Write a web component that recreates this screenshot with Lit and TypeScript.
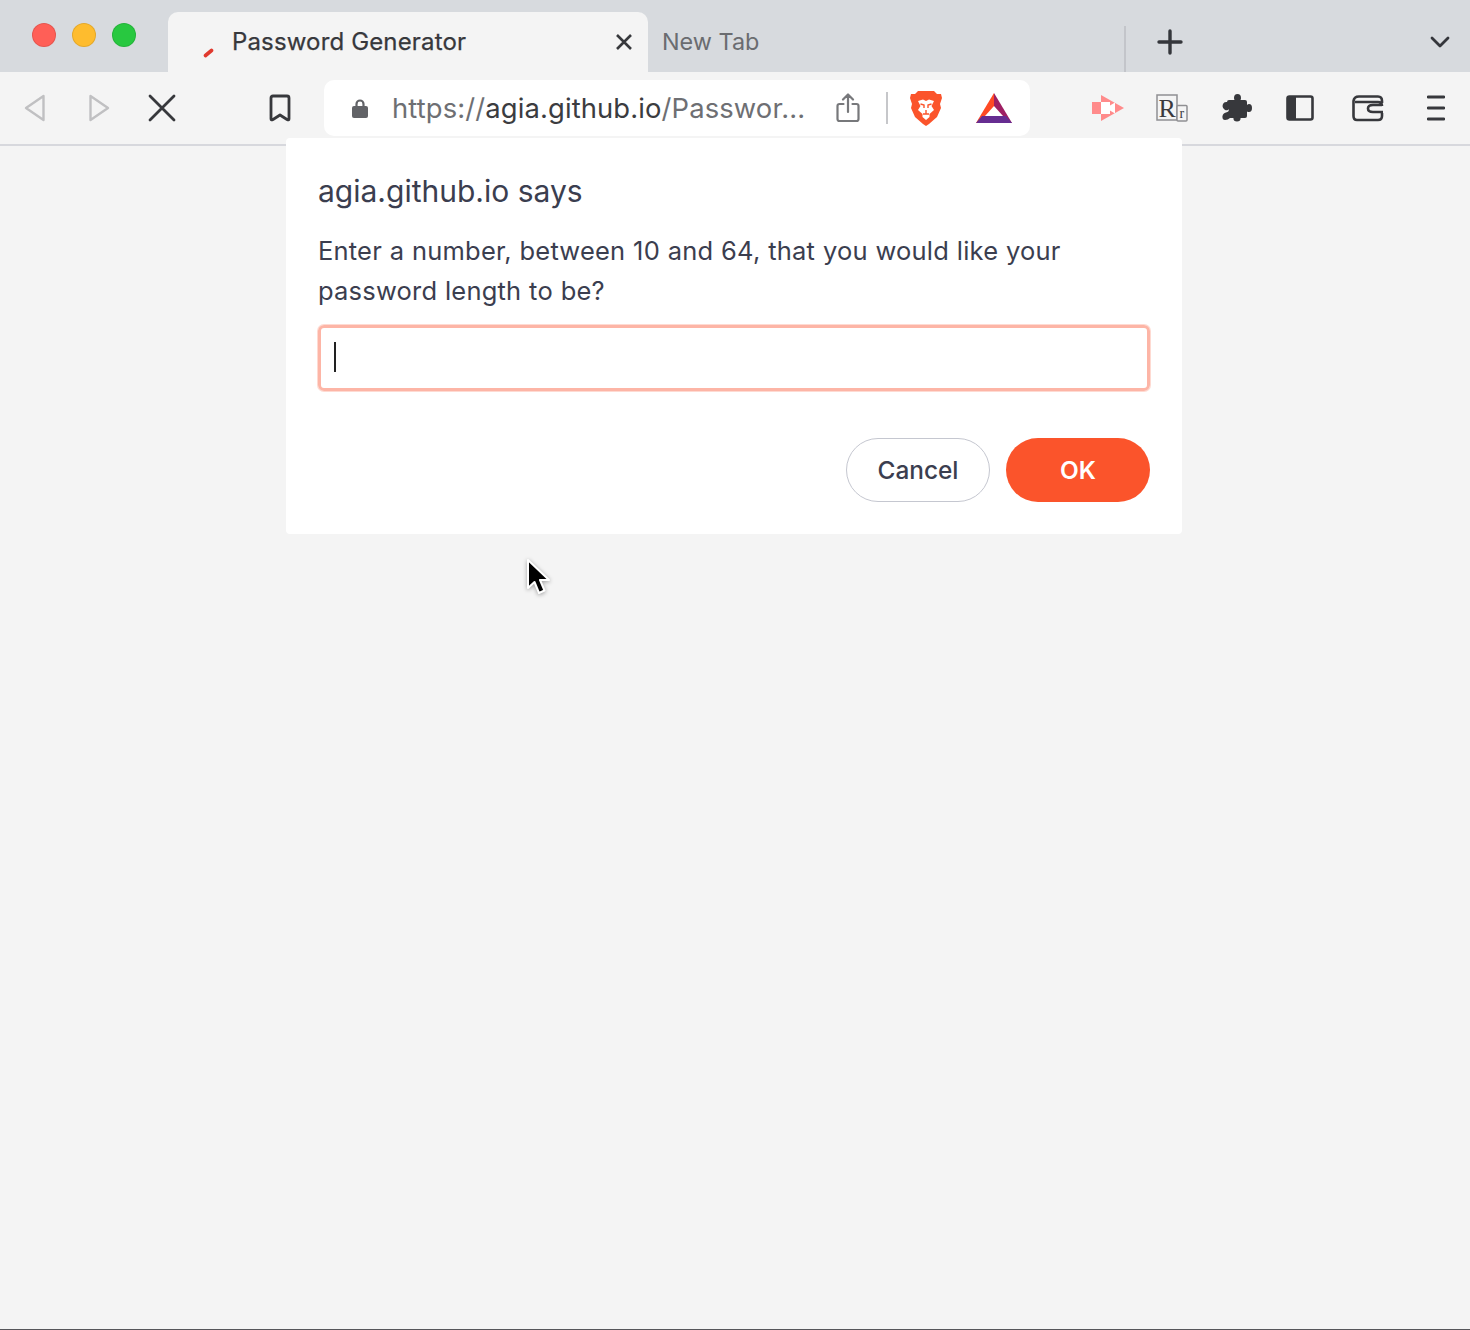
import { LitElement, html, css, svg } from "lit";
import { customElement } from "lit/decorators.js";

const ic = (w: number, h: number, vb: string, body: unknown, cls = "") =>
  html`<svg class=${cls} width=${w} height=${h} viewBox=${vb} style="flex:none;display:block">${body}</svg>`;

@customElement("app-root")
export class AppRoot extends LitElement {
  static styles = css`
    :host { display: block; width: 1470px; height: 1330px; position: relative; overflow: hidden; background: #f4f4f4; font-family: Inter, "Liberation Sans", sans-serif; }
    .strip { height: 72px; background: #d7dade; display: flex; align-items: flex-start; }
    .lights { display: flex; gap: 16px; padding: 23px 32px 0 32px; width: 168px; box-sizing: border-box; }
    .light { width: 24px; height: 24px; border-radius: 50%; box-sizing: border-box; border: 1px solid rgba(0,0,0,.1); }
    .tab { margin-top: 12px; width: 480px; height: 60px; box-sizing: border-box; background: #f4f4f4; border-radius: 10px 10px 0 0; display: flex; align-items: center; padding: 0 14px 0 35px; font-size: 24px; color: #37383c; }
    .fav { margin-top: 20px; }
    .tab .title { margin-left: 17px; flex: 1; position: relative; top: -1px; font-weight: 400; -webkit-text-stroke: .25px #37383c; letter-spacing: .15px; }
    .tab2 { width: 476px; height: 60px; margin-top: 12px; padding: 0 0 0 14px; box-sizing: border-box; display: flex; align-items: center; font-size: 23.4px; color: #6a6c70; }
    .tab2 span { position: relative; top: -1px; }
    .sep { width: 2px; height: 46px; background: #c3c5ca; margin-top: 26px; }
    .plus { margin: 29px 0 0 31px; }
    .chev { margin: 36px 0 0 247px; }
    .bar { height: 72px; display: flex; align-items: center; box-sizing: border-box; position: relative; }
    .line { height: 2px; background: #d7d8dd; }
    .url { width: 706px; height: 56px; background: #fff; border-radius: 10px; display: flex; align-items: center; box-sizing: border-box; margin-left: 32px; padding-left: 28px; font-size: 27.4px; letter-spacing: .12px; color: #6e6f73; white-space: nowrap; }
    .url .text { margin-left: 24px; margin-right: 30px; width: 414px; overflow: hidden; }
    .url b { font-weight: 400; color: #3b3c40; }
    .vr { width: 2px; height: 32px; background: #c6c7ca; margin-left: 26px; }
    .dialog { position: absolute; left: 286px; top: 138px; width: 896px; height: 396px; background: #fff; border-radius: 4px; box-sizing: border-box; padding: 33px 32px 32px; color: #3b3e4f; display: flex; flex-direction: column; }
    .h { font-size: 30px; line-height: 40px; }
    .msg { font-size: 25.5px; line-height: 40px; margin-top: 20px; letter-spacing: .2px; word-spacing: .4px; }
    .input { height: 66px; margin-top: 14px; box-sizing: border-box; border: 3px solid #fdb5a6; border-radius: 6px; box-shadow: 0 0 0 1px rgba(253,181,166,.5); display: flex; align-items: center; padding-left: 13px; }
    .caret { width: 2px; height: 30px; background: #222; margin-top: -2px; }
    .btns { margin-top: 47px; display: flex; justify-content: flex-end; gap: 16px; }
    .btn { width: 144px; height: 64px; border-radius: 32px; box-sizing: border-box; display: flex; align-items: center; justify-content: center; }
    .cancel { border: 1px solid #c5c7d0; color: #3b3e4f; font-weight: 500; font-size: 24.4px; }
    .ok { background: #fb542b; color: #fff; font-weight: 600; font-size: 24.4px; }
    .cursor { position: absolute; left: 525px; top: 558px; filter: drop-shadow(0 1px 2px rgba(0,0,0,.35)); }
    .bottom { position: absolute; left: 0; right: 0; bottom: 0; height: 1px; background: #55565a; }
  `;

  render() {
    const place = (ml: number, el: unknown) => html`<div style="margin-left:${ml}px;display:flex">${el}</div>`;
    return html`
      <div class="strip">
        <div class="lights">
          <div class="light" style="background:#ff5f57"></div>
          <div class="light" style="background:#febc2e"></div>
          <div class="light" style="background:#28c840"></div>
        </div>
        <div class="tab">
          ${ic(12, 12, "0 0 12 12", svg`<path d="M2.500 9.500 L8.500 4.500" stroke="#e0392e" stroke-width="3.600" stroke-linecap="round" fill="none"/>`, "fav")}
          <span class="title">Password Generator</span>
          ${ic(20, 20, "0 0 20 20", svg`<path d="M3 3 L17 17 M17 3 L3 17" stroke="#37383c" stroke-width="2.600" fill="none"/>`)}
        </div>
        <div class="tab2"><span>New Tab</span></div>
        <div class="sep"></div>
        <div class="plus">${ic(26, 26, "0 0 26 26", svg`<path d="M13 2 V24 M2 13 H24" stroke="#34363b" stroke-width="3.400" stroke-linecap="round" fill="none"/>`)}</div>
        <div class="chev">${ic(20, 12, "0 0 20 12", svg`<path d="M2 2 L10 10 L18 2" stroke="#34363b" stroke-width="2.800" stroke-linecap="round" stroke-linejoin="round" fill="none"/>`)}</div>
      </div>

      <div class="bar">
        ${place(24, ic(22, 28, "0 0 22 28", svg`<path d="M19.500 2 V26 L2 14 Z" stroke="#c0c0c2" stroke-width="2.400" stroke-linejoin="round" fill="none"/>`))}
        ${place(42, ic(22, 28, "0 0 22 28", svg`<path d="M2.500 2 V26 L20 14 Z" stroke="#c0c0c2" stroke-width="2.400" stroke-linejoin="round" fill="none"/>`))}
        ${place(38, ic(28, 28, "0 0 28 28", svg`<path d="M2 2 L26 26 M26 2 L2 26" stroke="#37383c" stroke-width="2.800" stroke-linecap="round" fill="none"/>`))}
        ${place(92, ic(24, 28, "0 0 24 28", svg`<path d="M3 4 Q3 2 5 2 H19 Q21 2 21 4 V25 Q21 26.500 19 25.500 L12 21 L5 25.500 Q3 26.500 3 25 Z" stroke="#37383c" stroke-width="2.800" stroke-linejoin="round" fill="none"/>`))}
        <div class="url">
          ${ic(16, 20, "0 0 16 20", svg`<path d="M4.500 9 V6 a3.500 3.500 0 0 1 7 0 V9" stroke="#626367" stroke-width="2.200" fill="none"/><rect x="0" y="8" width="16" height="12" rx="2" fill="#626367"/>`)}
          <span class="text">https://<b>agia.github.io</b>/Passwor...</span>
          ${ic(24, 30, "0 0 24 30", svg`<path d="M7.500 11 H3.500 Q1.500 11 1.500 13 V26 Q1.500 28 3.500 28 H20.500 Q22.500 28 22.500 26 V13 Q22.500 11 20.500 11 H16.500 M12 19 V2 M7 6.500 L12 1.500 L17 6.500" stroke="#77787b" stroke-width="2.200" fill="none" stroke-linecap="round" stroke-linejoin="round"/>`)}
          <div class="vr"></div>
          ${place(22, ic(32, 37, "0 0 32 37", svg`
            <path d="M8 1 H24 L27 4 L31 4 L32 8 L30 14 L31 18 L27 27 L19 34 L16 36 L13 34 L5 27 L1 18 L2 14 L0 8 L1 4 L5 4 Z" fill="#fb542b"/>
            <path d="M8 11 L13 9.500 L16 11 L19 9.500 L24 11 L21.500 16 L24 20 L19.500 24 L19.500 27 L16 30 L12.500 27 L12.500 24 L8 20 L10.500 16 Z" fill="#fff"/>
            <path d="M10.500 14 L14 15 L14 18 M21.500 14 L18 15 L18 18 M13 24 H19 M16 20 V24" stroke="#fb542b" stroke-width="1.400" fill="none"/>`))}
          ${place(34, ic(36, 30, "0 0 36 30", svg`
            <path d="M18 0 L0 30 H10 L18 16 Z" fill="#ff4a24"/>
            <path d="M18 0 V16 L26 30 H36 Z" fill="#9e1f63"/>
            <path d="M0 30 L6 23 H30 L36 30 Z" fill="#662d91"/>
            <path d="M18 13 L9 23 H27 Z" fill="#fff"/>`))}
        </div>
        ${place(62, ic(32, 26, "0 0 32 26", svg`
          <path d="M0 7 H9 V19 H0 Z M9 0 L32 13 L9 26 Z" fill="#ff8b8b"/>
          <path d="M9 7 H18 V10.500 L23 7.500 V18.500 L18 15.500 V19 H9 Z" fill="#fff"/>`))}
        ${place(32, ic(32, 28, "0 0 32 28", svg`
            <rect x="1" y="1" width="20" height="25" fill="none" stroke="#8f8f92" stroke-width="1.500"/>
            <rect x="21" y="11.500" width="10" height="15.500" rx="1" fill="#f4f4f4" stroke="#8f8f92" stroke-width="1.500"/>
            <text x="2.500" y="22.500" font-family="Liberation Serif, serif" font-size="26" fill="#3a3a3d">R</text>
            <text x="23.500" y="24" font-family="Liberation Serif, serif" font-size="14" fill="#3a3a3d">r</text>`))}
        ${place(34, ic(30, 30, "0 0 30 30", svg`
          <path d="M12 5 Q12 1 15.500 1 Q19 1 19 5 Q19 6 18.500 7 H23 Q25 7 25 9 V12 Q26 11 27 11 Q30 11 30 15 Q30 19 27 19 Q26 19 25 18.500 V23 Q25 25 23 25 H18.500 Q19 28 15 28.500 Q11 28 11.500 25 H8 Q6 27 3 27 Q0 27 0.500 23 Q1 20 4 19.500 Q7 19 7 16 Q6 18 3 17 Q-0.500 15 1 11 Q2 8.500 5 9 V9 Q5 7 7 7 H12.500 Q12 6 12 5 Z" fill="#37383c"/>`))}
        ${place(34, ic(28, 26, "0 0 28 26", svg`
          <rect x="1.500" y="1.500" width="25" height="23" rx="2" fill="none" stroke="#37383c" stroke-width="2.600"/>
          <rect x="1.500" y="1.500" width="8.500" height="23" fill="#37383c"/>`))}
        ${place(38, ic(32, 28, "0 0 32 28", svg`
          <path d="M30 9 V7 Q30 2.500 26 2.500 H7 Q2 2.500 1.500 7 V22 Q1.500 26 5 26 H26 Q30 26 30 22 V19" stroke="#37383c" stroke-width="2.600" fill="none"/>
          <path d="M3 8 H26 Q30 8 30 12 M30 11 H21 Q16 11 16 14.500 Q16 18 21 18 H31" stroke="#37383c" stroke-width="2.600" fill="none"/>`))}
        ${place(43, ic(18, 26, "0 0 18 26", svg`<path d="M1 2 H17 M1 13 H17 M1 24 H17" stroke="#37383c" stroke-width="2.800" stroke-linecap="round"/>`))}
      </div>
      <div class="line"></div>

      <div class="dialog">
        <div class="h">agia.github.io says</div>
        <div class="msg">Enter a number, between 10 and 64, that you would like your password length to be?</div>
        <div class="input"><div class="caret"></div></div>
        <div class="btns">
          <div class="btn cancel">Cancel</div>
          <div class="btn ok">OK</div>
        </div>
      </div>

      <div class="cursor">
        ${ic(28, 40, "0 0 28 40", svg`
          <path d="M3 2 V30 L9.500 24 L14 35 L19.500 32.500 L15 22 L24 22 Z" fill="#000" stroke="#fff" stroke-width="2" stroke-linejoin="round"/>`)}
      </div>
      <div class="bottom"></div>
    `;
  }
}
